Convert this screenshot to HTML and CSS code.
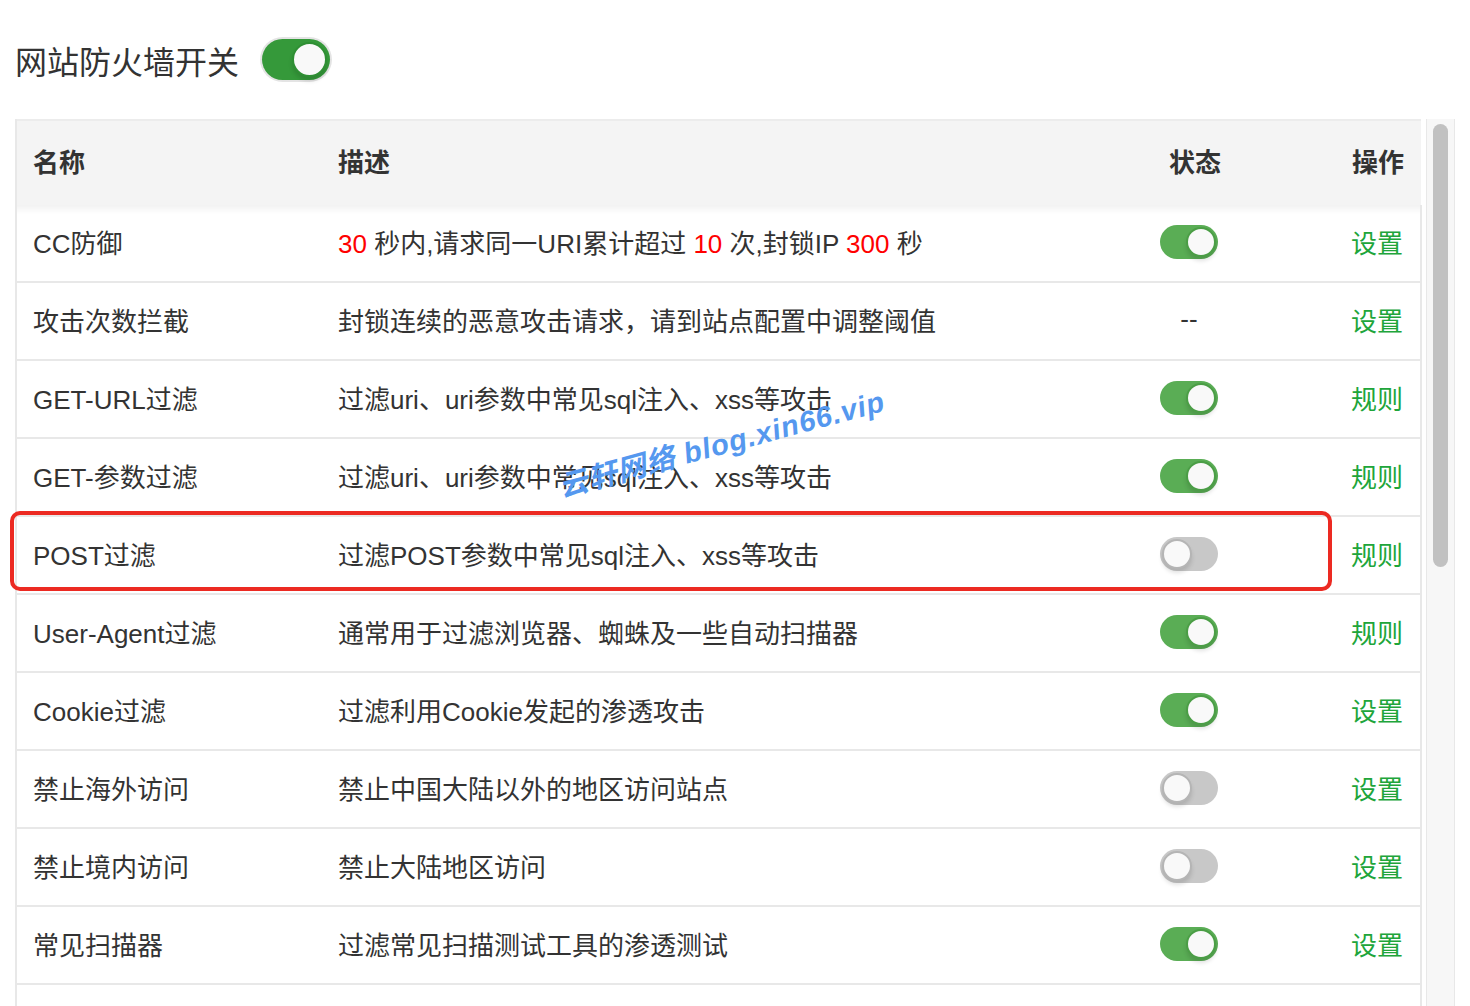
FILE: index.html
```html
<!DOCTYPE html>
<html lang="zh-CN">
<head>
  <meta charset="UTF-8">
  <meta name="viewport" content="width=device-width, initial-scale=1.0">
  <title>网站防火墙</title>
  <link rel="stylesheet" href="styles.css">
</head>
<body>
  <div class="switch-bar">
    <span class="switch-title">网站防火墙开关</span>
    <span class="toggle toggle-lg on"></span>
  </div>

  <div class="panel">
    <div class="table-box">
      <table class="waf-table">
        <colgroup>
          <col class="col-name">
          <col>
          <col class="col-state">
          <col class="col-op">
        </colgroup>
        <thead>
          <tr>
            <th>名称</th>
            <th>描述</th>
            <th class="c">状态</th>
            <th class="r">操作</th>
          </tr>
        </thead>
        <tbody>
          <tr>
            <td>CC防御</td>
            <td><em>30</em> 秒内,请求同一URI累计超过 <em>10</em> 次,封锁IP <em>300</em> 秒</td>
            <td class="c"><span class="toggle on"></span></td>
            <td class="r"><a href="#">设置</a></td>
          </tr>
          <tr>
            <td>攻击次数拦截</td>
            <td>封锁连续的恶意攻击请求，请到站点配置中调整阈值</td>
            <td class="c">--</td>
            <td class="r"><a href="#">设置</a></td>
          </tr>
          <tr>
            <td>GET-URL过滤</td>
            <td>过滤uri、uri参数中常见sql注入、xss等攻击</td>
            <td class="c"><span class="toggle on"></span></td>
            <td class="r"><a href="#">规则</a></td>
          </tr>
          <tr>
            <td>GET-参数过滤</td>
            <td>过滤uri、uri参数中常见sql注入、xss等攻击</td>
            <td class="c"><span class="toggle on"></span></td>
            <td class="r"><a href="#">规则</a></td>
          </tr>
          <tr>
            <td>POST过滤</td>
            <td>过滤POST参数中常见sql注入、xss等攻击</td>
            <td class="c"><span class="toggle"></span></td>
            <td class="r"><a href="#">规则</a></td>
          </tr>
          <tr>
            <td>User-Agent过滤</td>
            <td>通常用于过滤浏览器、蜘蛛及一些自动扫描器</td>
            <td class="c"><span class="toggle on"></span></td>
            <td class="r"><a href="#">规则</a></td>
          </tr>
          <tr>
            <td>Cookie过滤</td>
            <td>过滤利用Cookie发起的渗透攻击</td>
            <td class="c"><span class="toggle on"></span></td>
            <td class="r"><a href="#">设置</a></td>
          </tr>
          <tr>
            <td>禁止海外访问</td>
            <td>禁止中国大陆以外的地区访问站点</td>
            <td class="c"><span class="toggle"></span></td>
            <td class="r"><a href="#">设置</a></td>
          </tr>
          <tr>
            <td>禁止境内访问</td>
            <td>禁止大陆地区访问</td>
            <td class="c"><span class="toggle"></span></td>
            <td class="r"><a href="#">设置</a></td>
          </tr>
          <tr>
            <td>常见扫描器</td>
            <td>过滤常见扫描测试工具的渗透测试</td>
            <td class="c"><span class="toggle on"></span></td>
            <td class="r"><a href="#">设置</a></td>
          </tr>
          <tr class="more">
            <td></td>
            <td></td>
            <td></td>
            <td></td>
          </tr>
        </tbody>
      </table>

      <!-- highlight around the POST row -->
      <div class="mark-box"></div>
      <div class="watermark">云轩网络 blog.xin66.vip</div>
    </div>

    <div class="scrollbar"><div class="thumb"></div></div>
  </div>
</body>
</html>
```

FILE: styles.css
```css
html, body { margin: 0; height: 100%; overflow: hidden; background: #fff; }
body { font-family: "Liberation Sans", "Noto Sans CJK SC", sans-serif; color: #333; }

.switch-bar { display: flex; align-items: center; gap: 23px; height: 119px; padding-left: 15px; box-sizing: border-box; }
.switch-title { font-size: 32px; color: #333; }

/* switches */
.toggle { display: inline-block; position: relative; width: 58px; height: 34px; border-radius: 17px; background: #c8c8c8; vertical-align: middle; }
.toggle::after { content: ""; position: absolute; top: 2px; left: 2px; width: 26px; height: 26px; border-radius: 50%; background: #f9f9f9; border: 2px solid #b5b5b5; box-shadow: 0 4px 4px rgba(0,0,0,0.12); }
.toggle.on { background: #5aad55; }
.toggle.on::after { left: auto; right: 2px; border-color: #4b9e46; }
.toggle-lg { width: 68px; height: 41px; border-radius: 21px; box-shadow: 0 0 0 2px #e4e4e4; }
.toggle-lg::after { width: 31px; height: 31px; top: 3px; }
.toggle-lg.on { background: #35993a; }
.toggle-lg.on::after { right: 3px; border-color: #2f8f34; }

.panel { display: flex; padding-left: 15px; height: 887px; overflow: hidden; }
.table-box { position: relative; width: 1407px; border-left: 2px solid #e8e8e8; box-sizing: border-box; }

.waf-table { width: 100%; border-collapse: collapse; table-layout: fixed; font-size: 26px; }
.col-name { width: 305px; }
.col-state { width: 190px; }
.col-op { width: 137px; }
.waf-table th { height: 78px; background: #f4f4f4; font-weight: bold; text-align: left; padding: 0 16px 6px; border-top: 2px solid #ececec; }
.waf-table td { height: 73px; padding: 0 16px 3px; border-bottom: 2px solid #e8e8e8; white-space: nowrap; }
.waf-table td:last-child { border-right: 2px solid #e8e8e8; }
.waf-table tbody tr:first-child td { background: linear-gradient(rgba(0,0,0,0.05), rgba(0,0,0,0) 9px); }
.waf-table .c { text-align: center; }
.waf-table th.c { padding-left: 28px; }
.waf-table .r { text-align: right; padding-right: 17px; }
.waf-table em { font-style: normal; color: #f00; }
.waf-table a { color: #20a53a; text-decoration: none; }

.mark-box { position: absolute; left: -7px; top: 392px; width: 1314px; height: 72px; border: 4px solid #ec2a22; border-radius: 10px; }

.watermark { position: absolute; left: 547px; top: 344px; transform: rotate(-15deg); transform-origin: left bottom; font-size: 29px; font-weight: bold; font-style: italic; color: #5598ef; letter-spacing: 1px; white-space: nowrap; }

.scrollbar { width: 27px; margin-left: 4px; background: #f7f7f7; border-left: 1px solid #e8e8e8; border-right: 1px solid #e8e8e8; }
.thumb { width: 15px; height: 443px; margin: 5px 0 0 6px; border-radius: 8px; background: #c1c1c1; }
```
